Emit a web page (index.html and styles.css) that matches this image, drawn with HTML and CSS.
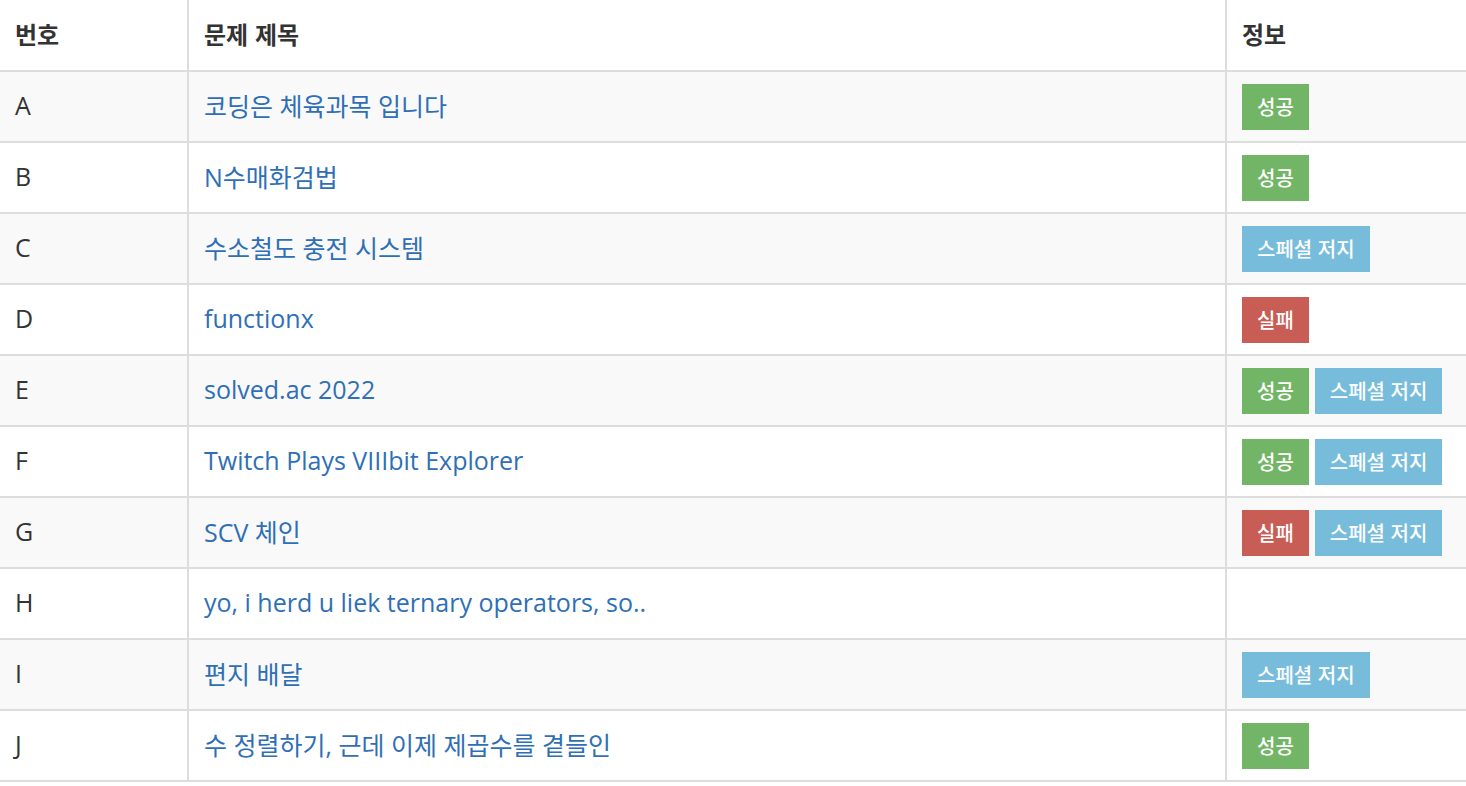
FILE: index.html
```html
<!DOCTYPE html>
<html lang="ko">
<head>
<meta charset="utf-8">
<link rel="stylesheet" href="styles.css">
</head>
<body>
<table class="problems">
  <colgroup>
    <col class="c-num">
    <col class="c-title">
    <col class="c-info">
  </colgroup>
  <thead>
    <tr><th>번호</th><th>문제 제목</th><th>정보</th></tr>
  </thead>
  <tbody>
    <tr><td>A</td><td><a href="#">코딩은 체육과목 입니다</a></td><td class="info"><span class="lbl ok">성공</span></td></tr>
    <tr><td>B</td><td><a href="#">N수매화검법</a></td><td class="info"><span class="lbl ok">성공</span></td></tr>
    <tr><td>C</td><td><a href="#">수소철도 충전 시스템</a></td><td class="info"><span class="lbl sj">스페셜 저지</span></td></tr>
    <tr><td>D</td><td><a href="#">functionx</a></td><td class="info"><span class="lbl fail">실패</span></td></tr>
    <tr><td>E</td><td><a href="#">solved.ac 2022</a></td><td class="info"><span class="lbl ok">성공</span><span class="lbl sj">스페셜 저지</span></td></tr>
    <tr><td>F</td><td><a href="#">Twitch Plays VIIIbit Explorer</a></td><td class="info"><span class="lbl ok">성공</span><span class="lbl sj">스페셜 저지</span></td></tr>
    <tr><td>G</td><td><a href="#">SCV 체인</a></td><td class="info"><span class="lbl fail">실패</span><span class="lbl sj">스페셜 저지</span></td></tr>
    <tr><td>H</td><td><a href="#">yo, i herd u liek ternary operators, so..</a></td><td class="info"></td></tr>
    <tr><td>I</td><td><a href="#">편지 배달</a></td><td class="info"><span class="lbl sj">스페셜 저지</span></td></tr>
    <tr><td>J</td><td><a href="#">수 정렬하기, 근데 이제 제곱수를 곁들인</a></td><td class="info"><span class="lbl ok">성공</span></td></tr>
  </tbody>
</table>
</body>
</html>
```

FILE: styles.css
```css
html, body {
  margin: 0;
  padding: 0;
  background: #fff;
}
body {
  font-family: "Open Sans", "Noto Sans CJK KR", sans-serif;
  font-size: 25px;
  color: #333;
}
.problems {
  width: 100%;
  border-collapse: collapse;
  table-layout: fixed;
}
.c-num { width: 188px; }
.c-info { width: 240px; }
.problems th,
.problems td {
  height: 71px;
  box-sizing: border-box;
  padding: 0 15px 3px;
  text-align: left;
  vertical-align: middle;
  border: 2px solid #ddd;
  white-space: nowrap;
}
.problems td.info { padding-bottom: 0; }
.problems tr > :first-child { border-left: none; }
.problems tr > :last-child { border-right: none; }
.problems thead th {
  border-top: none;
  font-weight: 700;
  font-family: "Noto Sans CJK KR", sans-serif;
  font-size: 24px;
}
.problems tbody tr:nth-child(odd) { background: #f9f9f9; }
.problems a {
  color: #2f6fb6;
  text-decoration: none;
}
.lbl {
  display: inline-block;
  height: 46px;
  line-height: 46px;
  padding: 0 15px;
  margin-right: 6px;
  font-family: "Noto Sans CJK KR", sans-serif;
  font-size: 20px;
  font-weight: 500;
  color: #fff;
  vertical-align: middle;
}
.lbl:last-child { margin-right: 0; }
.ok { background: #73b566; }
.sj { background: #77bddb; }
.fail { background: #c85d56; }
```
